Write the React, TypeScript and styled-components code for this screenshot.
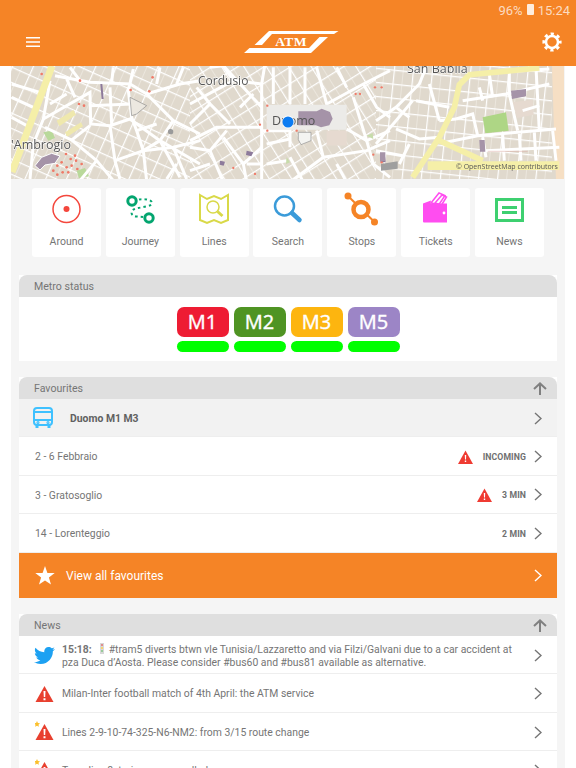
import React from 'react';
import styled, { createGlobalStyle } from 'styled-components';
import { FaTwitter } from 'react-icons/fa';

const GlobalStyle = createGlobalStyle`
  html, body {
    margin: 0;
    padding: 0;
    background: #fff;
    font-family: Roboto, "Liberation Sans", sans-serif;
  }
`;

const Screen = styled.div`
  width: 576px;
  height: 768px;
  overflow: hidden;
  background: #fff;
`;

const Header = styled.header`
  height: 66px;
  background: #f58426;
  display: flex;
  flex-direction: column;
`;

const StatusBar = styled.div`
  height: 21px;
  padding-right: 6px;
  display: flex;
  align-items: center;
  justify-content: flex-end;
  gap: 4px;
  font-size: 13px;
  color: rgba(255, 255, 255, 0.72);
`;

const BatteryIcon = styled.span`
  width: 7px;
  height: 11px;
  margin-bottom: 2px;
  background: rgba(255, 255, 255, 0.85);
  border-radius: 1px;
`;

const Toolbar = styled.div`
  flex: 1;
  padding: 0 14px 3px 25px;
  display: flex;
  align-items: center;
  justify-content: space-between;
  color: #fff;
`;

const LogoMark = styled.svg`
  margin-right: 2px;
`;

const Content = styled.main`
  margin: 0 11px 0 11px;
  background: #f5f5f5;
  min-height: 702px;
  display: flex;
  flex-direction: column;
`;

const MapBox = styled.div`
  height: 113px;
  margin-right: 1px;
  overflow: hidden;
  background: #e0d9cd;
`;

const Tiles = styled.nav`
  margin: 9px 21px 0;
  display: grid;
  grid-template-columns: repeat(7, 69px);
  justify-content: space-between;
`;

const Tile = styled.a`
  height: 69px;
  background: #fff;
  border-radius: 3px;
  display: flex;
  flex-direction: column;
  align-items: center;
  font-size: 10.5px;
  line-height: 14px;
  color: #757575;
`;

const TileIcon = styled.svg`
  width: 69px;
  height: 47px;
  flex: none;
`;

const Section = styled.section<{ $gap?: number }>`
  margin: ${(p) => p.$gap ?? 16}px 8px 0;
  background: #fff;
`;

const SectionHead = styled.div`
  height: 22px;
  padding: 0 10px 0 15px;
  background: #dfdfdf;
  border-radius: 8px 8px 0 0;
  display: flex;
  align-items: center;
  justify-content: space-between;
  font-size: 10.6px;
  color: #757575;
`;

const MetroBody = styled.div`
  height: 64px;
  padding-top: 10px;
  box-sizing: border-box;
  display: flex;
  justify-content: center;
  gap: 5px;
`;

const MetroLine = styled.div`
  width: 52px;
  display: flex;
  flex-direction: column;
  gap: 4px;
`;

const MetroBadge = styled.div<{ $color: string }>`
  height: 30px;
  border-radius: 7px;
  background: ${(p) => p.$color};
  color: #fff;
  font-family: "Open Sans", sans-serif;
  font-size: 20px;
  font-style: normal;
  line-height: 29px;
  text-align: center;
  -webkit-text-stroke: 0.4px #fff;
`;

const MetroState = styled.div`
  height: 11px;
  border-radius: 6px;
  background: #00ff00;
`;

const Row = styled.div<{ $shaded?: boolean }>`
  height: 38.4px;
  box-sizing: border-box;
  padding: 1px 15px 0 16px;
  background: ${(p) => (p.$shaded ? '#f2f2f2' : '#fff')};
  border-bottom: 1px solid #eeeeee;
  display: flex;
  align-items: center;
  font-size: 10.4px;
  line-height: 12.5px;
  color: #757575;
`;

const RowTitle = styled.span`
  flex: 1;
  min-width: 0;
  padding-top: 2px;
`;

const StrongTitle = styled(RowTitle)`
  margin-left: 17px;
  font-weight: 700;
  color: #616161;
`;

const NewsText = styled(RowTitle)`
  margin-left: 5px;
  padding-right: 12px;
`;

const Clock = styled.b`
  margin-left: 10px;
  margin-right: 8px;
  padding-top: 1px;
  font-size: 8.7px;
  letter-spacing: 0.1px;
  color: #707070;
`;

const ViewAll = styled.div`
  height: 45.5px;
  padding: 0 15px 0 16px;
  background: #f58426;
  display: flex;
  align-items: center;
  font-size: 12px;
  color: #fff;
`;

const ViewAllText = styled.span`
  flex: 1;
  margin-left: 11px;
  padding-top: 1px;
`;

const Chevron = ({ color = '#757575' }: { color?: string }) => (
  <svg width="8" height="13" viewBox="0 0 8 13" fill="none" stroke={color} strokeWidth="1.4">
    <path d="M1 1l6 5.5-6 5.5" />
  </svg>
);

const UpArrow = () => (
  <svg width="14" height="13" viewBox="0 0 14 13" fill="none" stroke="#808080" strokeWidth="2">
    <path d="M7 13V1.6M1 7l6-5.6L13 7" />
  </svg>
);

const Triangle = () => (
  <svg width="15" height="14" viewBox="0 0 15 14">
    <path d="M7.5 0.5L15 14H0z" fill="#ef3b32" />
    <path d="M6.8 5h1.4l-.2 4.6H7zM6.8 10.6h1.4V12H6.8z" fill="#fff" />
  </svg>
);

const NewsAlert = ({ star }: { star?: boolean }) => (
  <svg width="22" height="22" viewBox="0 0 22 22" style={{ flex: 'none' }}>
    <path d="M9.5 3L18.500 19H.5z" fill="#e8402f" />
    <path d="M8.500 8h2l-.3 6H8.800zM8.500 15.200h2v2h-2z" fill="#fff" />
    {star && <path transform="translate(-1 0)" d="M3 0l.9 1.900 2.100.3-1.500 1.500.4 2.100L3 4.800 1.100 5.800l.4-2.100L0 2.200l2.100-.3z" fill="#fbc02d" />}
  </svg>
);

const BusIcon = () => (
  <svg width="20" height="22" viewBox="0 0 20 22" fill="none" stroke="#3fc1ff" strokeWidth="2" style={{ flex: 'none', marginLeft: -2 }}>
    <rect x="1" y="1" width="18" height="17" rx="3" />
    <path d="M1 5h18M1 13h18" />
    <path d="M4 18v3M16 18v3" strokeWidth="3" />
    <circle cx="5" cy="15.500" r=".6" />
    <circle cx="15" cy="15.500" r=".6" />
  </svg>
);

const GearIcon = () => (
  <svg width="20" height="20" viewBox="0 0 20 20" fill="none" stroke="#fff">
    <circle cx="10" cy="10" r="6" strokeWidth="2.500" />
    <circle cx="10" cy="10" r="8.200" strokeWidth="2.800" strokeDasharray="3.240 3.200" strokeDashoffset="1.620" />
  </svg>
);

const TrafficLight = () => (
  <svg width="8" height="11" viewBox="0 0 8 11" style={{ margin: '0 3px 0 6px', verticalAlign: '-1px' }}>
    <rect x="2" y="0" width="4" height="11" fill="#d8d8d8" />
    <circle cx="4" cy="2" r="1" fill="#e57373" />
    <circle cx="4" cy="5" r="1" fill="#ffd54f" />
    <circle cx="4" cy="8" r="1" fill="#81c784" />
  </svg>
);

const LeftStreets = [
  '165,35 270,55 390,60 440,90 520,170 600,210',
  '130,165 270,85 272,180 330,185 390,165 480,230 600,300',
  '270,185 215,228 290,290 340,350',
  '150,50 130,165 100,240 90,345',
  '35,100 100,130', '35,160 90,190', '35,60 120,85',
  '400,15 385,80 395,160 410,200 430,260 440,350',
  '330,185 345,290 360,345', '345,290 430,260 480,230', '430,260 520,250 600,230',
  '480,230 540,340', '520,170 480,230', '270,125 395,120', '330,70 335,180',
  '200,45 225,100', '135,190 215,228', '500,345 530,300', '440,90 540,60 600,50',
  '480,10 470,60', '550,10 530,60', '210,10 240,50', '340,10 335,55', '290,290 240,350',
  '410,200 470,180', '520,250 560,345', '70,230 100,240', '150,120 200,90',
];
const MidStreets = [
  '225,0 215,60 215,354', '0,120 130,50 215,60', '0,230 80,190 215,190', '100,5 215,130',
  '250,10 250,120', '300,10 300,120', '345,10 345,120',
  '380,10 410,120 520,60 600,20', '470,195 530,230 600,200', '215,200 300,200 300,250',
  '380,200 400,280 300,354', '400,280 530,260 600,230', '230,240 300,225',
  '530,230 550,300 600,340', '100,220 160,300 215,250', '0,250 60,260 100,354',
  '120,180 60,120 0,180', '160,300 170,354', '60,260 110,200', '300,280 340,354',
  '440,10 470,70', '520,60 560,130 600,160', '20,70 60,120', '150,130 190,90',
  '215,300 170,300', '230,300 290,290', '440,300 470,354', '0,320 60,300',
  '60,10 100,5 130,50', '490,100 530,230',
];
const RightStreets = [
  '0,170 60,130 130,60 150,10', '0,240 60,170 110,110', '260,110 390,90 520,60',
  '400,20 400,90 425,200', '480,10 490,200', '440,140 490,125', '240,165 290,150 305,215',
  '210,235 305,215 540,195', '320,220 330,280', '380,210 385,290', '430,210 435,290',
  '475,205 480,290', '530,200 540,290', '330,260 550,250', '60,195 130,225 190,220',
  '100,240 70,300', '310,70 320,110', '0,260 80,275', '340,30 350,100', '160,60 190,170',
  '120,110 220,130', '290,30 520,15', '60,130 100,160', '190,170 240,165',
];
const RedDots = [
  [160, 320], [172, 305], [185, 295], [198, 270], [212, 285], [225, 275], [200, 310], [215, 305],
  [232, 315], [245, 300], [172, 332], [188, 325], [205, 325], [228, 290], [240, 50], [125, 30],
  [237, 120], [252, 125], [392, 78], [448, 82], [458, 40],
];

const blockPatterns = [
  { id: 'blocksA', angle: 24, x: 11, w: 179 },
  { id: 'blocksB', angle: -32, x: 190, w: 186 },
  { id: 'blocksC', angle: 6, x: 376, w: 176 },
];

const StreetMap = () => (
  <svg width="553" height="113" viewBox="11 66 553 113" style={{ display: 'block', filter: 'blur(0.35px)' }}>
    <defs>
      {blockPatterns.map((b) => (
        <pattern key={b.id} id={b.id} width="19" height="14" patternUnits="userSpaceOnUse" patternTransform={`rotate(${b.angle})`}>
          <path d="M9.500 0v14" stroke="#ebe6dd" strokeWidth="1" fill="none" />
          <path d="M0 0h19M0 0v14" stroke="#fff" strokeWidth="2.400" fill="none" />
        </pattern>
      ))}
    </defs>
    <rect x="11" y="66" width="553" height="113" fill="#e0d9cd" />
    {blockPatterns.map((b) => (
      <rect key={b.id} x={b.x} y="66" width={b.w} height="113" fill={`url(#${b.id})`} />
    ))}
    <path d="M552 66h12v113h-8l-2-50z" fill="#f6dfc4" />
    <g transform="translate(0 64) scale(.3333)" fill="none" stroke="#fff" strokeWidth="9">
      <path d="M130 205l25-5 10 22-20 8zM230 320l25-8 12 25-30 6z" fill="#b9d99a" stroke="none" />
      <path d="M170 170l50-32 8 14-50 35zM195 205l48-30 6 12-48 32z" fill="#efe8ad" stroke="none" />
      {LeftStreets.map((p) => <polyline key={p} points={p} />)}
      <path d="M105 305l20-25 30-12 25 8-15 22-30 5-15 15z" fill="#a593a8" stroke="#fff" strokeWidth="3" />
      <path d="M304 60l4 45" stroke="#8d7a9b" strokeWidth="6" />
      <path d="M390 100l50 25-30 25-15 5z" fill="#ece8e0" stroke="#8b8b8b" strokeWidth="2" />
      <circle cx="512" cy="203" r="8" fill="#9a9a9a" stroke="none" />
      {RedDots.map(([x, y]) => <circle key={`${x}-${y}`} cx={x} cy={y} r="4" fill="#ef7a68" stroke="none" />)}
    </g>
    <g transform="translate(190 64) scale(.3333)" fill="none" stroke="#fff" strokeWidth="9">
      <path d="M410 200h60v45h-60z" fill="#e6dad0" stroke="none" />
      {MidStreets.map((p) => <polyline key={p} points={p} />)}
      <path d="M230 122h240v75H230z" fill="#ecebe8" stroke="none" />
      <path d="M325 142h55l15-8 25 10 8 20-10 20-25 6-15-6h-53z" fill="#a593a8" stroke="none" />
      <path d="M325 205h38v25l-30 12-8-15z" fill="#f4f4f1" stroke="#8f8f8f" strokeWidth="2" />
      <path d="M570 265l14 2 3 28-16-2zM170 260l20 5-6 12-16-4zM90 290l15 3-4 12-12-3z" fill="#8d7a9b" stroke="none" />
      <path d="M530 215l18-8 2 18zM290 280l10 15-12 5z" fill="#c7dcaa" stroke="none" />
      {[[497, 90], [510, 90], [555, 70], [575, 70], [232, 125], [320, 200], [232, 200], [210, 182], [130, 312], [195, 330], [550, 272], [575, 295]].map(([x, y]) => (
        <circle key={`${x}-${y}`} cx={x} cy={y} r="3.500" fill="#ef7a68" stroke="none" />
      ))}
    </g>
    <g transform="translate(376 64) scale(.3333)" fill="none" stroke="#fff" strokeWidth="9">
      <path d="M320 160l70-15 8 55-70 8z" fill="#aed685" stroke="none" />
      <path d="M410 115l60-8 3 45-50 10z" fill="#e6dad0" stroke="none" />
      {RightStreets.map((p) => <polyline key={p} points={p} />)}
      <path d="M405 80l45-5v22l-42 8z" fill="#a593a8" stroke="none" />
      <path d="M310 228h16l2 35h-16zM12 265h16v26H12z" fill="#a593a8" stroke="none" />
      <path d="M15 300l50-8v22l-50 6z" fill="#9f9f9f" stroke="none" />
      <path d="M490 12L280 32l-30 30-15 68-45 90-80 120" stroke="#f5efa8" strokeWidth="17" />
      <path d="M190 230l130 60" stroke="#f5efa8" strokeWidth="17" />
      <path d="M155 305h395" stroke="#f5efa8" strokeWidth="26" />
      <path d="M335 262h120" stroke="#d9a8a0" strokeWidth="1.500" />
    </g>
    <path d="M52 66L12 172" stroke="#f5efa8" strokeWidth="7" fill="none" />
    <g fontFamily="'Open Sans', Roboto, sans-serif" fill="#555" stroke="#fff" strokeWidth="1" paintOrder="stroke">
      <text x="198" y="85" fontSize="12">Cordusio</text>
      <text x="407" y="73" fontSize="12.500">San Babila</text>
      <text x="11" y="149" fontSize="12.500">'Ambrogio</text>
      <text x="272" y="125" fontSize="12.500" stroke="none">Duomo</text>
      <text x="456" y="169" fontSize="7" stroke="none">© OpenStreetMap contributors</text>
    </g>
    <circle cx="288" cy="122" r="6.500" fill="#fff" opacity=".8" />
    <circle cx="288" cy="122" r="5.500" fill="#0c7cf2" />
  </svg>
);

const Logo = () => (
  <LogoMark width="96" height="24" viewBox="242 30 96 24" fill="#fff">
    <path d="M268 31h69.500l-4.500 3H271l-10 11h-7.500z" />
    <path d="M243 53H310L327 37h-8.500L308 48H248.500z" />
    <text x="290" y="46" textAnchor="middle" fontFamily="'Liberation Serif', serif" fontWeight="700" fontSize="13.500" letterSpacing=".4">ATM</text>
  </LogoMark>
);

const Tiles7 = [
  {
    label: 'Around',
    icon: (
      <>
        <circle cx="34.500" cy="21" r="13.500" fill="none" stroke="#f4473d" strokeWidth="1.500" />
        <circle cx="34.500" cy="21" r="3" fill="#f4473d" />
      </>
    ),
  },
  {
    label: 'Journey',
    icon: (
      <>
        <circle cx="26" cy="13" r="4.200" fill="none" stroke="#03a56f" strokeWidth="3" />
        <circle cx="43" cy="30" r="4.200" fill="none" stroke="#03a56f" strokeWidth="3" />
        <path d="M33 11.500c5-1 13 0 13 3.500s-10 4-16 5.500-6 7 0 8l7 .5" fill="none" stroke="#03a56f" strokeWidth="2" strokeDasharray="2.500 3" />
      </>
    ),
  },
  {
    label: 'Lines',
    icon: (
      <>
        <path d="M20 7l7 4 7-3 7 3 7-4v25l-7 3-7-3-7 3-7-3z" fill="none" stroke="#d9d948" strokeWidth="2" />
        <circle cx="33" cy="19" r="6" fill="none" stroke="#d9d948" strokeWidth="1.500" />
        <path d="M37.500 23.500l5 4.500" stroke="#d9d948" strokeWidth="3" />
      </>
    ),
  },
  {
    label: 'Search',
    icon: (
      <>
        <circle cx="31.500" cy="18" r="9.500" fill="none" stroke="#3b9bd9" strokeWidth="2.500" />
        <path d="M39 25l7.500 7" stroke="#3b9bd9" strokeWidth="4.500" strokeLinecap="round" />
      </>
    ),
  },
  {
    label: 'Stops',
    icon: (
      <>
        <path d="M21 8l27 26.500" stroke="#f58426" strokeWidth="2" />
        <circle cx="34" cy="21.500" r="7.500" fill="#fff" stroke="#f58426" strokeWidth="4.500" />
        <circle cx="21" cy="8" r="3.500" fill="#f58426" />
        <circle cx="47.500" cy="34" r="3.500" fill="#f58426" />
      </>
    ),
  },
  {
    label: 'Tickets',
    icon: (
      <>
        <path d="M30 15l8-10 6 2.500-6 9z" fill="none" stroke="#ff4df0" strokeWidth="1.500" />
        <path d="M34 15l7-8 4.500 2-5 8z" fill="none" stroke="#ff4df0" strokeWidth="1.500" />
        <path d="M22 15.500l8-3-.5 3H46v19H23a1 1 0 0 1-1-1z" fill="#ff4df0" />
        <circle cx="43" cy="25" r="1.400" fill="#fff" />
      </>
    ),
  },
  {
    label: 'News',
    icon: (
      <>
        <rect x="21.500" y="11.500" width="26" height="21" fill="none" stroke="#3ed070" strokeWidth="3" />
        <path d="M27 19.500h15M27 24.500h15" stroke="#3ed070" strokeWidth="3" />
      </>
    ),
  },
];

const metroLines = [
  { name: 'M1', color: '#ee1c33' },
  { name: 'M2', color: '#4f9423' },
  { name: 'M3', color: '#fdb50f' },
  { name: 'M5', color: '#9c85c6' },
];

const favourites = [
  { title: '2 - 6 Febbraio', time: 'INCOMING', alert: true },
  { title: '3 - Gratosoglio', time: '3 MIN', alert: true },
  { title: '14 - Lorenteggio', time: '2 MIN', alert: false },
];

const App = () => {
  return (
    <Screen>
      <GlobalStyle />
      <Header>
        <StatusBar>
          <span>96%</span>
          <BatteryIcon />
          <span>15:24</span>
        </StatusBar>
        <Toolbar>
          <svg width="16" height="12" viewBox="0 0 16 12" fill="#fff">
            <path d="M1 1h14v1.400H1zM1 5.300h14v1.400H1zM1 9.600h14V11H1z" />
          </svg>
          <Logo />
          <GearIcon />
        </Toolbar>
      </Header>
      <Content>
        <MapBox>
          <StreetMap />
        </MapBox>
        <Tiles>
          {Tiles7.map((t) => (
            <Tile key={t.label}>
              <TileIcon viewBox="0 0 69 47">{t.icon}</TileIcon>
              {t.label}
            </Tile>
          ))}
        </Tiles>
        <Section $gap={18}>
          <SectionHead>Metro status</SectionHead>
          <MetroBody>
            {metroLines.map((l) => (
              <MetroLine key={l.name}>
                <MetroBadge $color={l.color}>{l.name}</MetroBadge>
                <MetroState />
              </MetroLine>
            ))}
          </MetroBody>
        </Section>
        <Section>
          <SectionHead>
            Favourites
            <UpArrow />
          </SectionHead>
          <Row $shaded>
            <BusIcon />
            <StrongTitle>Duomo M1 M3</StrongTitle>
            <Chevron />
          </Row>
          {favourites.map((f) => (
            <Row key={f.title}>
              <RowTitle>{f.title}</RowTitle>
              {f.alert && <Triangle />}
              <Clock>{f.time}</Clock>
              <Chevron />
            </Row>
          ))}
          <ViewAll>
            <svg width="20" height="19" viewBox="0 0 20 19" fill="#fff">
              <path d="M10 0l2.400 6.900 7.300.2-5.800 4.400 2.100 7L10 14.400l-6 4.100 2.100-7L.3 7.100l7.300-.2z" />
            </svg>
            <ViewAllText>View all favourites</ViewAllText>
            <Chevron color="#fff" />
          </ViewAll>
        </Section>
        <Section>
          <SectionHead>
            News
            <UpArrow />
          </SectionHead>
          <Row>
            <FaTwitter size={21} color="#1da1f2" style={{ flex: 'none', marginLeft: -1, marginRight: 2 }} />
            <NewsText>
              <b>15:18:</b>
              <TrafficLight />
              #tram5 diverts btwn vle Tunisia/Lazzaretto and via Filzi/Galvani due to a car accident at pza Duca d’Aosta. Please consider #bus60 and #bus81 available as alternative.
            </NewsText>
            <Chevron />
          </Row>
          <Row>
            <NewsAlert />
            <NewsText>Milan-Inter football match of 4th April: the ATM service</NewsText>
            <Chevron />
          </Row>
          <Row>
            <NewsAlert star />
            <NewsText>Lines 2-9-10-74-325-N6-NM2: from 3/15 route change</NewsText>
            <Chevron />
          </Row>
          <Row>
            <NewsAlert star />
            <NewsText>Tram line 8: trains are cancelled</NewsText>
            <Chevron />
          </Row>
        </Section>
      </Content>
    </Screen>
  );
};

export default App;
